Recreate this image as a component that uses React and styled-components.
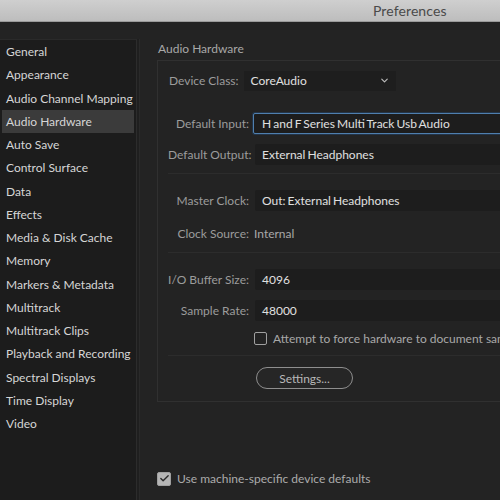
import React from "react";
import styled, { createGlobalStyle } from "styled-components";
import { ChevronDown, Check } from "lucide-react";

const GlobalStyle = createGlobalStyle`
  html, body {
    margin: 0;
    padding: 0;
    background: #232323;
  }
  body {
    font-family: Lato, "Open Sans", sans-serif;
    -webkit-font-smoothing: antialiased;
  }
`;

const Window = styled.div`
  width: 500px;
  height: 500px;
  display: flex;
  flex-direction: column;
  overflow: hidden;
  background: #232323;
`;

const TitleBar = styled.div`
  height: 21px;
  flex: none;
  background: linear-gradient(#cfcfcf, #bdbdbd);
  border-bottom: 1px solid #9a9a9a;
  display: flex;
  align-items: center;
  padding-left: 373px;
  color: #4a4a4a;
  font-size: 14px;
  letter-spacing: 0.1px;
`;

const Body = styled.div`
  flex: 1;
  display: flex;
  min-height: 0;
`;

const Sidebar = styled.ul`
  list-style: none;
  margin: 17px 0 0;
  padding: 0 2px;
  width: 132px;
  flex: none;
  background: #1c1c1c;
  border-top: 1px solid #2a2a2a;
  border-right: 1px solid #2c2c2c;
  box-shadow: 2px 0 0 #1f1f1f, 3px 0 0 #2a2a2a;
`;

const NavItem = styled.li`
  height: 23.25px;
  line-height: 23.25px;
  padding-left: 4px;
  font-size: 12px;
  color: #d6d6d6;
  white-space: nowrap;
  background: ${p => (p.$active ? "#3b3b3b" : "transparent")};
`;

const Content = styled.div`
  flex: none;
  width: 600px;
  padding: 0 0 0 20px;
  display: flex;
  flex-direction: column;
`;

const Heading = styled.div`
  font-size: 12px;
  color: #a8a8a8;
  height: 17px;
  padding: 19px 0 0 1px;
`;

const Group = styled.div`
  margin-top: 2px;
  border-top: 1px solid #303030;
  border-left: 1px solid #303030;
  border-bottom: 1px solid #303030;
  height: 340px;
  display: flex;
  flex-direction: column;
`;

const Section = styled.div`
  display: flex;
  flex-direction: column;
  gap: ${p => p.$gap || 10}px;
  padding: ${p => p.$pad || "0"};
  margin-left: 10px;
  border-bottom: ${p => (p.$line ? "1px solid #2c2c2c" : "none")};
`;

const Row = styled.div`
  display: grid;
  grid-template-columns: 81px 1fr;
  column-gap: ${p => p.$gap ?? 4}px;
  align-items: center;
  height: ${p => p.$h || 21}px;
`;

const Label = styled.span`
  font-size: 12px;
  color: #9c9c9c;
  text-align: right;
  white-space: nowrap;
`;

const Field = styled.div`
  height: 21px;
  box-sizing: border-box;
  display: flex;
  align-items: center;
  padding-left: ${p => (p.$focus ? 8 : 7)}px;
  margin-left: ${p => (p.$focus ? 0 : 2)}px;
  background: #1d1d1d;
  border: ${p => (p.$focus ? "1.5px solid #4f7fae" : "none")};
  border-radius: 2px;
  box-shadow: ${p => (p.$focus ? "0 0 0 1px #233448" : "none")};
  font-size: 12px;
  word-spacing: -1px;
  color: #e0e0e0;
  white-space: nowrap;
`;

const Plain = styled.span`
  font-size: 12px;
  color: #a8a8a8;
  padding-left: 2px;
`;

const ClassRow = styled.div`
  display: flex;
  align-items: center;
  gap: 5px;
  height: 21px;
  padding-left: 1px;
`;

const Select = styled.div`
  width: 152px;
  height: 20px;
  box-sizing: border-box;
  display: flex;
  align-items: center;
  justify-content: space-between;
  padding: 0 6px 0 7px;
  background: #1e1e1e;
  color: #e0e0e0;
  font-size: 12px;
  svg {
    color: #bdbdbd;
  }
`;

const CheckRow = styled.label`
  display: flex;
  align-items: center;
  gap: 6px;
  font-size: 12px;
  color: ${p => p.$color || "#a8a8a8"};
  white-space: nowrap;
  padding-left: ${p => p.$indent || 0}px;
`;

const Box = styled.span`
  width: ${p => p.$size || 12}px;
  height: ${p => p.$size || 12}px;
  box-sizing: border-box;
  border: 1.5px solid #a0a0a0;
  border-radius: 2px;
  background: ${p => (p.$checked ? "#b5b5b5" : "transparent")};
  display: flex;
  align-items: center;
  justify-content: center;
  flex: none;
  svg {
    color: #2a2a2a;
  }
`;

const Button = styled.button`
  width: 97px;
  height: 22px;
  margin-left: 88px;
  border: 1.5px solid #8e8e8e;
  border-radius: 11px;
  background: #262626;
  color: #b8b8b8;
  font-family: inherit;
  font-size: 12px;
  padding: 0;
`;

const Footer = styled.div`
  margin-top: 69px;
`;

const navItems = [
  "General",
  "Appearance",
  "Audio Channel Mapping",
  "Audio Hardware",
  "Auto Save",
  "Control Surface",
  "Data",
  "Effects",
  "Media & Disk Cache",
  "Memory",
  "Markers & Metadata",
  "Multitrack",
  "Multitrack Clips",
  "Playback and Recording",
  "Spectral Displays",
  "Time Display",
  "Video",
];

const App = () => {
  return (
    <>
      <GlobalStyle />
      <Window>
        <TitleBar>Preferences</TitleBar>
        <Body>
          <Sidebar>
            {navItems.map(item => (
              <NavItem key={item} $active={item === "Audio Hardware"}>
                {item}
              </NavItem>
            ))}
          </Sidebar>
          <Content>
            <Heading>Audio Hardware</Heading>
            <Group>
              <Section $pad="9px 0 22px">
                <ClassRow>
                  <Label>Device Class:</Label>
                  <Select>
                    CoreAudio
                    <ChevronDown size={11} strokeWidth={2.5} />
                  </Select>
                </ClassRow>
              </Section>
              <Section $line $pad="0 0 8px">
                <Row>
                  <Label>Default Input:</Label>
                  <Field $focus>H and F Series Multi Track Usb Audio</Field>
                </Row>
                <Row>
                  <Label>Default Output:</Label>
                  <Field>External Headphones</Field>
                </Row>
              </Section>
              <Section $line $gap={12} $pad="16px 0 8px">
                <Row>
                  <Label>Master Clock:</Label>
                  <Field>Out: External Headphones</Field>
                </Row>
                <Row $gap={3}>
                  <Label>Clock Source:</Label>
                  <Plain>Internal</Plain>
                </Row>
              </Section>
              <Section $line $gap={11} $pad="16px 0 9px">
                <Row $h={20}>
                  <Label>I/O Buffer Size:</Label>
                  <Field>4096</Field>
                </Row>
                <Row $h={20}>
                  <Label>Sample Rate:</Label>
                  <Field>48000</Field>
                </Row>
                <CheckRow $indent={86}>
                  <Box $size={13} />
                  Attempt to force hardware to document sample rate
                </CheckRow>
              </Section>
              <Section $pad="11px 0 0">
                <Button>Settings...</Button>
              </Section>
            </Group>
            <Footer>
              <CheckRow $color="#ababab">
                <Box $size={14} $checked>
                  <Check size={11} strokeWidth={3} />
                </Box>
                Use machine-specific device defaults
              </CheckRow>
            </Footer>
          </Content>
        </Body>
      </Window>
    </>
  );
};

export default App;
